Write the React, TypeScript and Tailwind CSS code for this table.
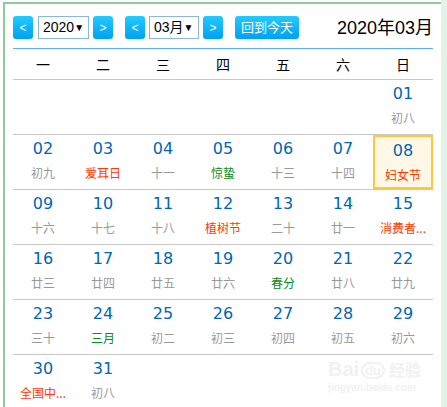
import React from "react";

type Cell = { d: string; l: string; c?: "red" | "green"; sel?: boolean } | null;

const rows: Cell[][] = [
  [null, null, null, null, null, null, { d: "01", l: "初八" }],
  [
    { d: "02", l: "初九" },
    { d: "03", l: "爱耳日", c: "red" },
    { d: "04", l: "十一" },
    { d: "05", l: "惊蛰", c: "green" },
    { d: "06", l: "十三" },
    { d: "07", l: "十四" },
    { d: "08", l: "妇女节", c: "red", sel: true },
  ],
  [
    { d: "09", l: "十六" },
    { d: "10", l: "十七" },
    { d: "11", l: "十八" },
    { d: "12", l: "植树节", c: "red" },
    { d: "13", l: "二十" },
    { d: "14", l: "廿一" },
    { d: "15", l: "消费者...", c: "red" },
  ],
  [
    { d: "16", l: "廿三" },
    { d: "17", l: "廿四" },
    { d: "18", l: "廿五" },
    { d: "19", l: "廿六" },
    { d: "20", l: "春分", c: "green" },
    { d: "21", l: "廿八" },
    { d: "22", l: "廿九" },
  ],
  [
    { d: "23", l: "三十" },
    { d: "24", l: "三月", c: "green" },
    { d: "25", l: "初二" },
    { d: "26", l: "初三" },
    { d: "27", l: "初四" },
    { d: "28", l: "初五" },
    { d: "29", l: "初六" },
  ],
  [{ d: "30", l: "全国中...", c: "red" }, { d: "31", l: "初八" }, null, null, null, null, null],
];

const weekdays = ["一", "二", "三", "四", "五", "六", "日"];

const cjk = { fontFamily: '"Liberation Sans", "Noto Sans CJK SC", sans-serif' };

function Btn({ children, cls = "" }: { children: React.ReactNode; cls?: string }) {
  return (
    <div
      className={`h-[23px] w-[20px] rounded-[3px] bg-gradient-to-b from-[#22cbff] to-[#00a0f2] text-white text-[12px] flex items-center justify-center ${cls}`}
      style={cjk}
    >
      {children}
    </div>
  );
}

function Sel({ text, w }: { text: string; w: string }) {
  return (
    <div
      className={`h-[23px] ${w} border border-[#8ab8da] bg-white flex items-center justify-between pl-[4px] pr-[5px] text-[14px] text-black whitespace-nowrap`}
      style={cjk}
    >
      <span className="whitespace-nowrap">{text}</span>
      <span className="text-[10px] leading-none">▼</span>
    </div>
  );
}

export default function App() {
  return (
    <div className="w-[447px] h-[407px] bg-white flex overflow-hidden">
      <div className="w-[441px] h-[407px] pt-[2px] pl-[3px] shrink-0">
        <div className="h-full border-t-2 border-l-2 border-[#8fc99c] bg-white pl-[8px] pr-[8px] pt-[12px] relative">
          {/* header */}
          <div className="flex items-center h-[23px]">
            <Btn>&lt;</Btn>
            <Sel text="2020" w="w-[51px] ml-[5px]" />
            <Btn cls="ml-[4px]">&gt;</Btn>
            <Btn cls="ml-[12px]">&lt;</Btn>
            <Sel text="03月" w="w-[50px] ml-[4px]" />
            <Btn cls="ml-[4px]">&gt;</Btn>
            <div
              className="ml-[12px] h-[23px] w-[64px] rounded-[3px] bg-gradient-to-b from-[#22cbff] to-[#00a0f2] text-white text-[13px] flex items-center justify-center"
              style={cjk}
            >
              回到今天
            </div>
            <div className="ml-auto text-[18px] text-black leading-none" style={cjk}>
              2020年03月
            </div>
          </div>
          <div className="mt-[9px] h-px bg-[#5cb0f2]" />
          {/* weekdays */}
          <div className="grid grid-cols-7 h-[31px] border-b border-[#c8c8c8]">
            {weekdays.map((w) => (
              <div
                key={w}
                className="flex items-center justify-center text-[14px] text-black"
                style={{ fontFamily: '"Noto Sans CJK SC", sans-serif' }}
              >
                {w}
              </div>
            ))}
          </div>
          {rows.map((r, i) => (
            <div
              key={i}
              className={`grid grid-cols-7 h-[55px] ${i < rows.length - 1 ? "border-b border-[#c8c8c8]" : ""}`}
            >
              {r.map((c, j) => (
                <div
                  key={j}
                  className={`flex flex-col items-center pt-[5px] ${
                    c && c.sel ? "bg-[#fff8e6] border-2 border-[#ffc83c] pt-[3px]" : ""
                  }`}
                >
                  {c && (
                    <>
                      <div
                        className="text-[16px] leading-[18px] text-[#0066b5]"
                        style={{ fontFamily: '"DejaVu Sans", Verdana, sans-serif' }}
                      >
                        {c.d}
                      </div>
                      <div
                        className={`mt-[7px] text-[12px] leading-[16px] whitespace-nowrap ${
                          c.c === "red" ? "text-[#ff3a00]" : c.c === "green" ? "text-[#0a8a22]" : "text-[#999999]"
                        }`}
                        style={{ fontFamily: '"Noto Sans CJK SC", sans-serif' }}
                      >
                        {c.l}
                      </div>
                    </>
                  )}
                </div>
              ))}
            </div>
          ))}
          {/* watermark */}
          <div className="absolute left-[323px] top-[355px] flex flex-col items-start pointer-events-none select-none">
            <div className="flex items-end gap-[2px] text-[#f1f1f1]" style={cjk}>
              <span className="text-[20px] font-bold leading-none">Bai</span>
              <span className="text-[13px] font-bold leading-none rounded-full border-2 border-[#f1f1f1] px-[2px]">du</span>
              <span className="text-[16px] font-bold leading-none ml-[2px]">经验</span>
            </div>
            <div className="text-[10px] text-[#f1f1f1] font-bold leading-none mt-[4px]" style={cjk}>
              jingyan.baidu.com
            </div>
          </div>
        </div>
      </div>
      <div className="flex-1 bg-[#e1f2e6]" />
    </div>
  );
}
